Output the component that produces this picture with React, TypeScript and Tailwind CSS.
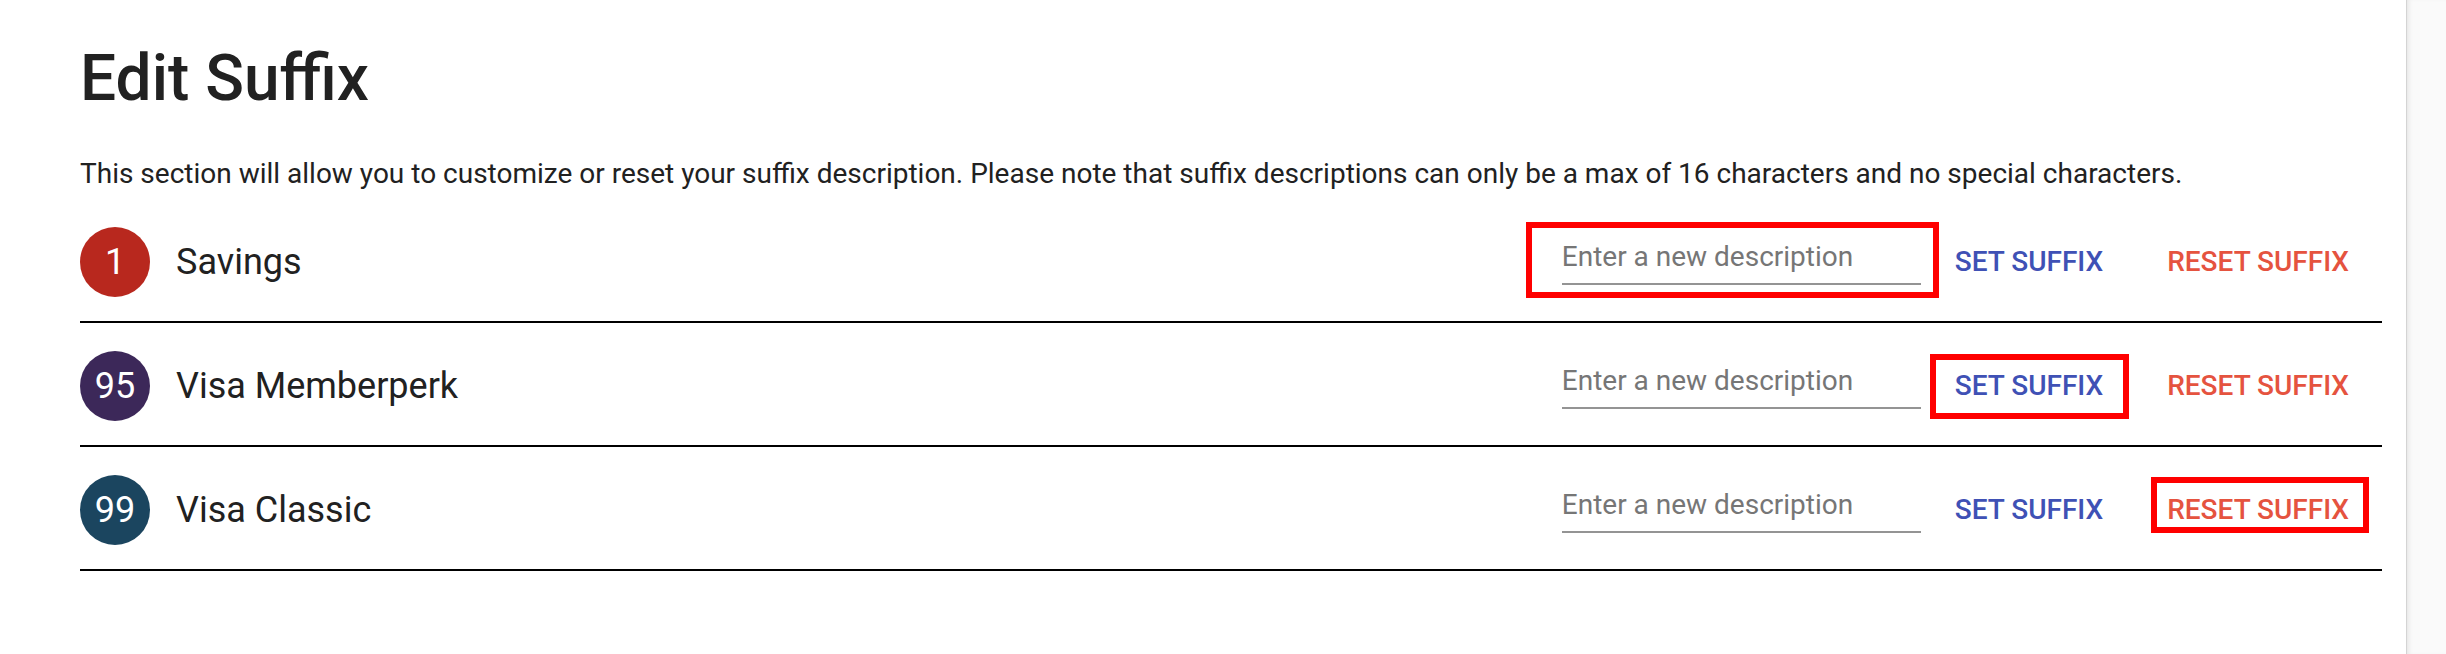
import React from "react";

const rows = [
  { num: "1", title: "Savings", color: "bg-[#b8281e]" },
  { num: "95", title: "Visa Memberperk", color: "bg-[#3c2859]" },
  { num: "99", title: "Visa Classic", color: "bg-[#1b455f]" },
];

export default function App() {
  return (
    <div className="flex h-[654px] w-[2446px] bg-white font-['Roboto',sans-serif] text-[#212121]">
      <div className="w-[2406px] shrink-0 pl-[80px] pr-[24px] pt-[47px]">
        <h1 className="text-[64px] font-medium leading-none">Edit Suffix</h1>
        <p className="mt-[42px] text-[28px] leading-[42px]">
          This section will allow you to customize or reset your suffix description. Please note that suffix descriptions can only be a max of 16 characters and no special characters.
        </p>
        <div className="mt-[4px]">
          {rows.map((r, i) => (
            <div key={r.num} className="relative flex h-[124px] items-center border-b-2 border-black pt-[4px]">
              <div className={`flex h-[70px] w-[70px] shrink-0 items-center justify-center rounded-full ${r.color} text-[36px] text-white`}>
                {r.num}
              </div>
              <div className="ml-[26px] text-[36px]">{r.title}</div>
              <div className="ml-auto mb-[11px] w-[359px]">
                <input
                  placeholder="Enter a new description"
                  className="block h-[56px] w-full border-b-2 border-[#949494] bg-transparent pt-[8px] pb-[6px] text-[28px] leading-[40px] outline-none placeholder:text-[#767676]"
                />
              </div>
              <button className="ml-[18px] px-[16px] py-[12px] text-[28px] font-medium uppercase leading-[36px] text-[#3f51b5]">
                Set Suffix
              </button>
              <button className="ml-[32px] mr-[17px] px-[16px] py-[12px] text-[28px] font-medium uppercase leading-[36px] text-[#e5533f]">
                Reset Suffix
              </button>
              {i === 0 && (
                <div className="pointer-events-none absolute left-[1446px] top-[23px] h-[76px] w-[413px] border-[6px] border-[#ff0000]" />
              )}
              {i === 1 && (
                <div className="pointer-events-none absolute left-[1850px] top-[31px] h-[65px] w-[199px] border-[6px] border-[#ff0000]" />
              )}
              {i === 2 && (
                <div className="pointer-events-none absolute left-[2071px] top-[30px] h-[56px] w-[218px] border-[6px] border-[#ff0000]" />
              )}
            </div>
          ))}
        </div>
      </div>
      <div className="flex-1 border-l border-[#d4d4d4] bg-[#fafafa] shadow-[inset_4px_0_4px_-2px_rgba(0,0,0,0.08)]" />
    </div>
  );
}
